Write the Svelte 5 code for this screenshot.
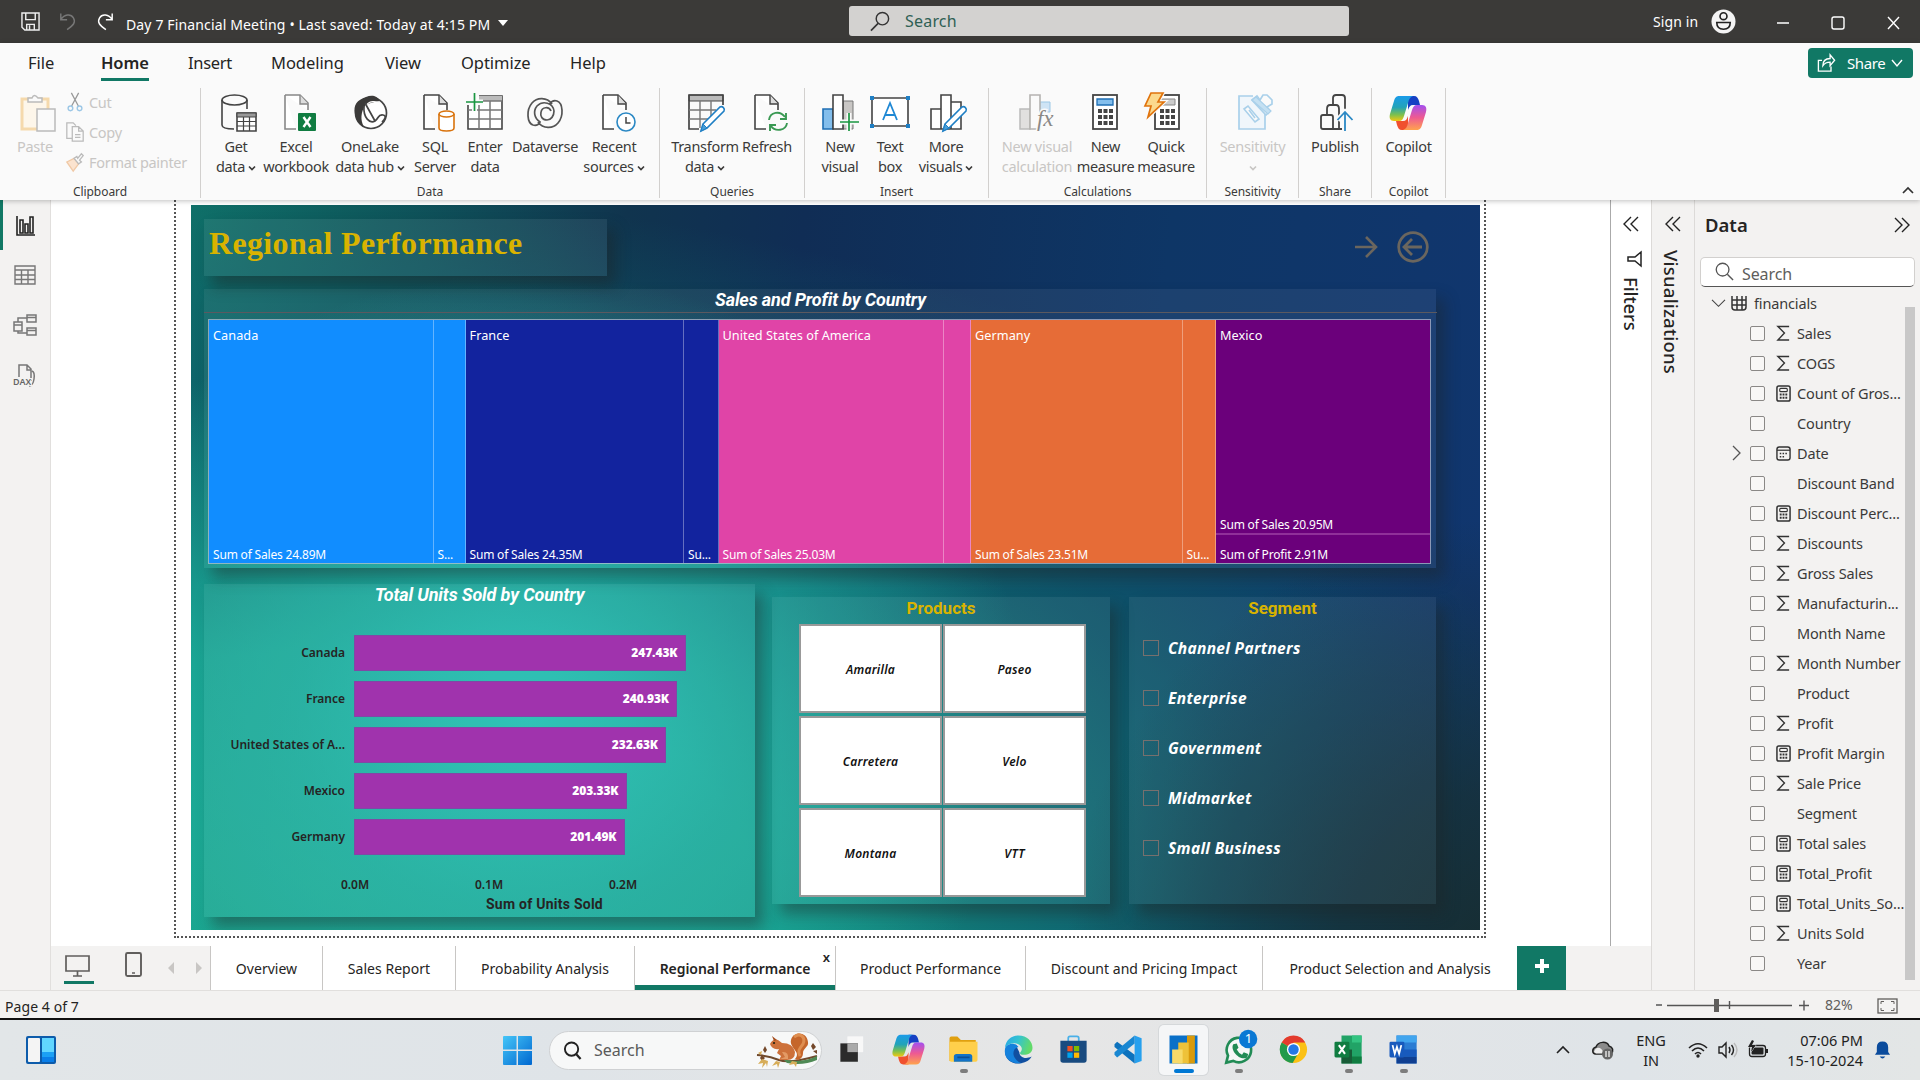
<script>
  const doc = '<path d="M5 2h15l8 8v7M5 2v34h11" fill="#fff" stroke="#444" stroke-width="1.6"/><path d="M20 2v9h8" fill="#ddd" stroke="#444" stroke-width="1.4"/>';
  const copilot = `<defs><linearGradient id="ca" x1="0" y1="0" x2="0" y2="1"><stop offset="0" stop-color="#1a9bea"/><stop offset=".45" stop-color="#22a3b8"/><stop offset=".75" stop-color="#7cc04e"/><stop offset="1" stop-color="#f2c811"/></linearGradient><linearGradient id="cb" x1="0" y1="0" x2="0" y2="1"><stop offset="0" stop-color="#a34ff0"/><stop offset=".5" stop-color="#ee5a92"/><stop offset="1" stop-color="#ffa34d"/></linearGradient></defs>
  <path d="M20 3h6c3 0 4 2 5 5l1 4h-7c-3 0-4 2-5 5z" fill="#1540c4"/><path d="M20 37h-6c-3 0-4-2-5-5l-1-4h7c3 0 4-2 5-5z" fill="#f0502e"/>
  <path d="M11 3h14c-3 1-4 3-5 7l-4 13c-1 3-2 5-5 5H6c-4 0-5-3-4-7l4-13c1-4 3-5 5-5z" fill="url(#ca)"/><path d="M29 37H15c3-1 4-3 5-7l4-13c1-3 2-5 5-5h5c4 0 5 3 4 7l-4 13c-1 4-3 5-5 5z" fill="url(#cb)"/>`;
  const pencil = '<path d="M17 31L34 14a3 3 0 0 1 4 4L21 35l-6 3z" fill="#fff" stroke="#1f7fc4" stroke-width="1.6"/><path d="M17 31l4 4-6 3z" fill="#4a9fd8" stroke="#1f7fc4"/>';
  const calc = '<rect x="8" y="2" width="24" height="34" fill="#fff" stroke="#444" stroke-width="1.8"/><path d="M13 16h4v4h-4zM18.500 16h4v4h-4zM24 16h4v4h-4zM13 22h4v4h-4zM18.500 22h4v4h-4zM24 22h4v4h-4zM13 28h4v4h-4zM18.500 28h4v4h-4zM24 28h4v4h-4z" fill="#444"/>';
  const icons = {
    get: '<path d="M2 7v25c0 3 5 4 12 4M27 7v9" fill="none" stroke="#444" stroke-width="1.6"/><ellipse cx="14.500" cy="7" rx="12.500" ry="5" fill="none" stroke="#444" stroke-width="1.6"/><path d="M17 20h19v18H17z" fill="#fff" stroke="#444" stroke-width="1.6"/><path d="M17 20h19v4H17z" fill="#999" stroke="#444"/><path d="M17 28.500h19M17 33h19M23.500 24v14M29.500 24v14" stroke="#444" stroke-width="1.200"/>',
    excel: doc.replaceAll('#444', '#888') + '<rect x="18" y="20" width="18" height="18" rx="1" fill="#107c41"/><path d="M23.500 24l7 10M30.500 24l-7 10" stroke="#fff" stroke-width="2.400"/>',
    onelake: '<circle cx="21" cy="20" r="15.500" fill="#fff" stroke="#444" stroke-width="1.700"/><path d="M16 4C7 7 3 12 5 21c1 7 5 11 9 13-4-7-3-15 1-21 5-4 10-4 15-5-3-6-9-6-14-4z" fill="#3b3a39"/><path d="M15 14c4-7 11-6 15-4" fill="none" stroke="#fafafa" stroke-width="1.200"/><path d="M14 13c-1 12 6 18 11 15 4-3 3-7 8-6 4 1 2 4-1 7M15 10l10 18" fill="none" stroke="#444" stroke-width="1.700"/>',
    sql: doc + '<path d="M20 21v14c0 4 15 4 15 0V21" fill="#fff" stroke="#d9730d" stroke-width="1.600"/><ellipse cx="27.500" cy="21" rx="7.500" ry="3" fill="#fff" stroke="#d9730d" stroke-width="1.600"/>',
    enter: '<path d="M3 12v24h34V3H14" fill="#fff" stroke="#444" stroke-width="1.600"/><path d="M14 3h23v5H14z" fill="#bbb"/><path d="M3 17h34M3 26h34M14 12v24M25 8v28M14 8h23" stroke="#777" stroke-width="1.500"/><path d="M9.500 0v18M1 9h17" stroke="#fafafa" stroke-width="5"/><path d="M9.500 0v18M1 9h17" stroke="#1a9641" stroke-width="1.700"/>',
    dataverse: '<path d="M27 11C22 4 12 4 7 10 1 17 2 30 8 32c4 1 6-1 7-3-6-4-7-11-3-16 6-6 16-3 17 5 0 5-3 9-7 9-5 0-7-4-6-8 1-5 8-6 10-1M13 29c5 7 15 7 20 1 6-7 5-20-1-22-4-1-6 1-7 3" fill="none" stroke="#555" stroke-width="1.700"/>',
    recent: doc + '<circle cx="28" cy="29" r="9" fill="#fff" stroke="#2b88c4" stroke-width="1.600"/><path d="M28 24v6h4.500" fill="none" stroke="#444" stroke-width="1.500"/>',
    transform: '<path d="M3 2h34v6H3z" fill="#bbb" stroke="#444"/><path d="M37 12V2H3v34h10" fill="none" stroke="#444" stroke-width="1.700"/><path d="M3 17h27M3 26h19M14 8v27M25 8v16" stroke="#777" stroke-width="1.400"/>' + pencil,
    refresh: doc + '<path d="M19 27c1-8 11-10 16-3M36 20v6h-6M37 30c-1 8-12 9-16 3M20 38v-6h6" fill="none" stroke="#3a9953" stroke-width="1.900"/>',
    newvis: '<path d="M3 16h10v20H3z" fill="#83beec" stroke="#1f6fb4" stroke-width="1.600"/><path d="M23 8h10v28H23z" fill="#c8c6c4" stroke="#777"/><path d="M13 2h10v34H13z" fill="#fff" stroke="#444" stroke-width="1.600"/><path d="M29 20v18M20 29h19" stroke="#fafafa" stroke-width="5"/><path d="M29 20v18M20 29h19" stroke="#1a9641" stroke-width="1.700"/>',
    textbox: '<path d="M2 5h36v28H2z" fill="#fff" stroke="#444" stroke-width="1.600"/><path d="M0 3h4v4H0zM36 3h4v4h-4zM0 31h4v4H0zM36 31h4v4h-4z" fill="#1f7fc4"/><path d="M13 27l7-17 7 17M15.500 22h9" fill="none" stroke="#1f88d4" stroke-width="1.800"/>',
    morevis: '<path d="M3 16h10v20H3zM23 9h10v27H23zM13 2h10v34H13z" fill="#fff" stroke="#444" stroke-width="1.600"/>' + pencil,
    viscalc: '<path d="M3 16h10v20H3z" fill="#e1e0df" stroke="#bbb" stroke-width="1.500"/><path d="M23 9h10v10H23z" fill="#cfe4f5" stroke="#9cc7e6"/><path d="M13 2h10v34H13z" fill="#fafafa" stroke="#b5b3b1" stroke-width="1.600"/><text x="20" y="33" font-size="23" font-family="Liberation Serif" font-style="italic" fill="#8a8886" stroke="#fafafa" stroke-width="3" paint-order="stroke">fx</text>',
    newmeas: calc + '<path d="M12 6h16v6H12z" fill="#83beec" stroke="#1f6fb4" stroke-width="1.300"/>',
    quick: '<g transform="translate(5 0)">' + calc + '<path d="M14 6h14v6H14z" fill="#ccc" stroke="#888"/></g><path d="M9 0h12l-5 9h6L6 24l3-11H3z" fill="#fbd98d" stroke="#fafafa" stroke-width="4"/><path d="M9 0h12l-5 9h6L6 24l3-11H3z" fill="#fbd98d" stroke="#e0730c" stroke-width="1.700"/>',
    sens: '<path d="M19 3H5v33h26V20" fill="#f0f6fb" stroke="#a9d0ea" stroke-width="1.700"/><path d="M10 16l4-3 11 13-4 3zM15 17l6 8" fill="#fafafa" stroke="#a9d0ea" stroke-width="1.600"/><path d="M18 7l5-4 3 4 3-5h4l5 5v4l-5 3 3 4-4 4z" fill="#fafafa" stroke="#a9d0ea" stroke-width="1.700"/><path d="M18 7l4-3 15 14-3 3z" fill="#c4e0f2" stroke="#a9d0ea" stroke-width="1.200"/>',
    publish: '<path d="M14 12V5q0-3 3-3h6q3 0 3 3v31M8 22v-6q0-4 3-4h6q3 0 3 4v20M2 24q0-2 2-2h8q2 0 2 2v12H4q-2 0-2-2zM14 36h9" fill="none" stroke="#444" stroke-width="1.800"/><path d="M26 38V20M18.500 27l7.500-8 7.500 8" fill="none" stroke="#fafafa" stroke-width="5"/><path d="M26 38V20M18.500 27l7.500-8 7.500 8" fill="none" stroke="#2b88c4" stroke-width="1.800"/>',
    copilot
  };
  const groups = [
    { n: 'Data', w: 459, p: 9, tools: [['get', 'Get', 'data', 52, 1, 4], ['excel', 'Excel', 'workbook', 68, 0, 4], ['onelake', 'OneLake', 'data hub', 80, 1, 0], ['sql', 'SQL', 'Server', 50, 0, 4], ['enter', 'Enter', 'data', 50, 0, 0], ['dataverse', 'Dataverse', '', 70, 0, 0], ['recent', 'Recent', 'sources', 68, 1, 4]] },
    { n: 'Queries', w: 145, p: 12, tools: [['transform', 'Transform', 'data', 66, 1, 1], ['refresh', 'Refresh', '', 58, 0, 3]] },
    { n: 'Insert', w: 184, p: 10, tools: [['newvis', 'New', 'visual', 50, 0, 0], ['textbox', 'Text', 'box', 50, 0, 0], ['morevis', 'More', 'visuals', 62, 1, 2]] },
    { n: 'Calculations', w: 218, p: 11, tools: [['viscalc', 'New visual', 'calculation', 74, 0, 0, 1], ['newmeas', 'New', 'measure', 63, 0, -1], ['quick', 'Quick', 'measure', 58, 0, -4]] },
    { n: 'Sensitivity', w: 92, p: 0, tools: [['sens', 'Sensitivity', '', 91, 1, 1, 1]] },
    { n: 'Share', w: 73, p: 0, tools: [['publish', 'Publish', '', 72, 0, 4]] },
    { n: 'Copilot', w: 74, p: 0, tools: [['copilot', 'Copilot', '', 73, 0, -1]] }
  ];
  const menus = ['File', 'Home', 'Insert', 'Modeling', 'View', 'Optimize', 'Help'];
  const rail = [
    '<path d="M3 3v19h18M6 20V7h3v13zM11 20v-9h3v9zM16 20V4h3v16z" fill="none" stroke="#222" stroke-width="1.600"/>',
    '<path d="M2 3h20v18H2zM2 7h20M2 12h20M2 16.500h20M8.500 7v14M15 7v14" fill="none" stroke="#777" stroke-width="1.400"/>',
    '<path d="M1 9h8v9H1zM14 2h9v7h-9zM14 15h9v7h-9zM1 12h8M14 4.500h9M14 17.500h9M5 9V5h9M5 18v2h9" fill="none" stroke="#777" stroke-width="1.500"/>',
    '<path d="M6 14V2h8l4 4v12M14 2v5h4M19 8q3 1 2 8t-5 7" fill="none" stroke="#777" stroke-width="1.500"/><text x="0" y="22" font-size="9" font-weight="600" font-family="Noto Sans" fill="#666" stroke="#f3f2f1" stroke-width="2" paint-order="stroke">DAX</text>'
  ];
  const tree = [
    ['Canada', '24.89M', 'S...', '#118dff', 224.500, 32], ['France', '24.35M', 'Su...', '#12239e', 218.500, 34.500],
    ['United States of America', '25.03M', '', '#e044a7', 225.500, 27], ['Germany', '23.51M', 'Su...', '#e66c37', 211.500, 33.500]
  ];
  const bars = [['Canada', '247.43K', 331.500], ['France', '240.93K', 323], ['United States of A...', '232.63K', 312], ['Mexico', '203.33K', 272.500], ['Germany', '201.49K', 270.500]];
  const products = ['Amarilla', 'Paseo', 'Carretera', 'Velo', 'Montana', 'VTT'];
  const segments = ['Channel Partners', 'Enterprise', 'Government', 'Midmarket', 'Small Business'];
  const fields = [['Sales', 's'], ['COGS', 's'], ['Count of Gros...', 'c'], ['Country', ''], ['Date', 'd'], ['Discount Band', ''], ['Discount Perc...', 'c'], ['Discounts', 's'], ['Gross Sales', 's'], ['Manufacturin...', 's'], ['Month Name', ''], ['Month Number', 's'], ['Product', ''], ['Profit', 's'], ['Profit Margin', 'c'], ['Sale Price', 's'], ['Segment', ''], ['Total sales', 'c'], ['Total_Profit', 'c'], ['Total_Units_So...', 'c'], ['Units Sold', 's'], ['Year', '']];
  const fieldIcons = {
    s: '<path d="M14 1.500H2l7 7-7 7.500h12" fill="none" stroke="#333" stroke-width="1.500"/>',
    c: '<rect x="1" y="1" width="14" height="16" rx="2" fill="none" stroke="#333" stroke-width="1.600"/><rect x="4" y="3.500" width="8" height="3.500" rx="1" fill="none" stroke="#333" stroke-width="1.200"/><path d="M4 10h8M4 13.500h8" stroke="#333" stroke-width="2" stroke-dasharray="2 1"/>',
    d: '<rect x="1" y="2" width="14" height="14" rx="2.500" fill="none" stroke="#333" stroke-width="1.500"/><path d="M1 5.500h14" stroke="#333" stroke-width="1.300"/><path d="M4 9h8M4 12.500h5" stroke="#333" stroke-width="1.600" stroke-dasharray="1.600 1.400"/>'
  };
  const pages = [['Overview', 112], ['Sales Report', 133], ['Probability Analysis', 179], ['Regional Performance', 201], ['Product Performance', 190], ['Discount and Pricing Impact', 237], ['Product Selection and Analysis', 255]];
  const apps = [
    { s: '<path d="M13 5h18v18H13z" fill="#f8f8f8"/><path d="M5 13h20v21H5z" fill="#2b2b2b"/><path d="M13 13h12v10H13z" fill="#aaa"/>' },
    { s: copilot },
    { s: '<path d="M4 7q0-2 2-2h7l4 4h17v24H4z" fill="#e0a010"/><path d="M4 11h32v21q0 2-2 2H6q-2 0-2-2z" fill="#ffcf4b"/><path d="M9 34v-6q0-3 3-3h15q3 0 3 3v6z" fill="#1273c8"/><path d="M13 29h14" stroke="#0b4f94" stroke-width="2"/>', run: 1 },
    { s: '<defs><linearGradient id="e1" x1="0" y1="0" x2="1" y2=".3"><stop offset="0" stop-color="#28a5e8"/><stop offset=".5" stop-color="#34c3d0"/><stop offset="1" stop-color="#62da6a"/></linearGradient></defs><path d="M5 20C3 30 12 37 21 36c8-1 12-4 14-8-8 4-14 0-14-5l-4-8z" fill="#114fa0"/><path d="M4.500 20C5 13 16 11 20 17c-6 1-8 9-3 14 2 3 5 5 8 4.500C13 37 3 31 4.500 20z" fill="#1581dc"/><path d="M4.500 19C5 9 12 4 20 4c10 0 16 7 16 14 0 6-5 8-10 8-5 0-5-2-3-4 3-5-3-10-9-9-5 0-9 3-9.500 6z" fill="url(#e1)"/>' },
    { s: '<path d="M14 11V7q0-2 2-2h8q2 0 2 2v4" fill="none" stroke="#4ab0e8" stroke-width="2"/><path d="M5 10h30v22q0 3-3 3H8q-3 0-3-3z" fill="#194b80"/><path d="M13 16h6v6h-6z" fill="#f25022"/><path d="M20.500 16h6v6h-6z" fill="#7fba00"/><path d="M13 23.500h6v6h-6z" fill="#00a4ef"/><path d="M20.500 23.500h6v6h-6z" fill="#ffb900"/>' },
    { s: '<path d="M27 4l8 3v26l-8 3V4z" fill="#27a0ee"/><path d="M4 14l3-3 20 15v10L4 17z" fill="#0d72bd"/><path d="M4 26l3 3 20-16V4L4 23z" fill="#1987d2"/>' },
    { s: '<path d="M4 4h32v32H4z" fill="#0a70c8"/><path d="M24 4h9v32h-9z" fill="#d99a0b"/><path d="M14 12h12v24H14z" fill="#eec239"/><path d="M7 20h12v16H7z" fill="#f7da69"/>', active: 1 },
    { s: '<path d="M6 35l2-8a14 14 0 1 1 6 6z" fill="#f5f7f7" stroke="#218b55" stroke-width="3"/><path d="M14 14l4-1 2 5-2 2q2 4 6 6l2-3 5 2-1 4c-8 5-20-8-16-15z" fill="#218b55"/><circle cx="31" cy="8" r="10.500" fill="#0a78d4"/><text x="27" y="13" font-size="15" font-family="Noto Sans" fill="#fff">1</text>', run: 1 },
    { s: '<circle cx="20" cy="20" r="15.500" fill="#fbc116"/><path d="M20 20L6.500 12A15.500 15.500 0 0 1 33.500 12H20z" fill="#e33b2e"/><path d="M20 20l-13.500-8A15.500 15.500 0 0 0 19 35.500l7-12z" fill="#229a4b"/><circle cx="20" cy="20" r="7.500" fill="#fff"/><circle cx="20" cy="20" r="6" fill="#2478e5"/>' },
    { s: '<path d="M12 4h23v32H12z" fill="#21a366"/><path d="M24 4h11v8H24z" fill="#33c481"/><path d="M12 20h12v16H12z" fill="#185c37"/><path d="M24 28h11v8H24z" fill="#107c41"/><rect x="4" y="11" width="17" height="18" rx="1.500" fill="#107c41"/><path d="M9 15l7 10M16 15L9 25" stroke="#fff" stroke-width="2.400"/>', run: 1 },
    { s: '<path d="M12 4h23v32H12z" fill="#2b7cd3"/><path d="M12 4h23v8H12z" fill="#41a5ee"/><path d="M12 28h23v8H12z" fill="#103f91"/><path d="M12 20h23v8H12z" fill="#185abd"/><rect x="4" y="11" width="17" height="18" rx="1.500" fill="#185abd"/><path d="M7.500 15l2.500 10 2.500-8 2.500 8 2.500-10" fill="none" stroke="#fff" stroke-width="2"/>', run: 1 }
  ];
</script>

<div class="screen">
  <header class="titlebar">
    <svg class="save" viewBox="0 0 20 20"><path d="M1 1h18v18H4l-3-3zM5 1v7h10V1M6 19v-6h8v6M9 14v5" fill="none" stroke="#eee" stroke-width="1.500" /></svg>
    <svg class="undo" viewBox="0 0 20 20"><path d="M2 1v7h7M2 8C6 2 13 1 16 6s0 8-7 13" fill="none" stroke="#777" stroke-width="1.600" /></svg>
    <svg class="redo" viewBox="0 0 20 20"><path d="M18 1v7h-7M18 8C14 2 7 1 4 6s0 8 7 13" fill="none" stroke="#fff" stroke-width="1.600" /></svg>
    <span class="doc">Day 7 Financial Meeting&nbsp;•&nbsp;Last saved: Today at 4:15 PM</span><i class="tri"></i>
    <div class="topsearch"><svg viewBox="0 0 22 22"><circle cx="13" cy="8" r="6.500" fill="none" stroke="#333" stroke-width="1.500" /><path d="M8.500 13L1 20.500" stroke="#333" stroke-width="1.700" /></svg>Search</div>
    <span class="signin">Sign in</span>
    <svg class="user" viewBox="0 0 26 26"><circle cx="13" cy="13" r="12.500" fill="#f4f4f4" /><circle cx="13" cy="7.500" r="3.600" fill="none" stroke="#222" stroke-width="1.700" /><path d="M6 14h14q0 7-7 7t-7-7z" fill="none" stroke="#222" stroke-width="1.700" /></svg>
    <svg class="win" viewBox="0 0 124 16"><path d="M1 8h12M112 2l11 12M123 2l-11 12" stroke="#fff" stroke-width="1.400" /><rect x="56" y="2" width="12" height="12" rx="2" fill="none" stroke="#fff" stroke-width="1.400" /></svg>
  </header>

  <div class="ribbon">
    <nav class="menus">
      {#each menus as m, i}<span class="menu m{i}" class:on={m === 'Home'}>{m}</span>{/each}
      <button class="share"><svg viewBox="0 0 20 20"><path d="M5 7H1v12h14v-5M6 13c0-6 3-8 8-8V1l5 6-5 6V9c-4 0-6 1-8 4z" fill="none" stroke="#fff" stroke-width="1.500" /></svg>Share<svg class="chev" viewBox="0 0 12 12"><path d="M1 3l5 6 5-6" fill="none" stroke="#fff" stroke-width="1.400" /></svg></button>
    </nav>
    <div class="groups">
      <section class="group clip">
        <div class="cliprow">
          <div class="paste"><svg viewBox="0 0 36 40"><path d="M2 6h26v30H2z" fill="#fdf6ea" stroke="#f5d9ac" stroke-width="3" /><path d="M8 9V5h4q2-5 6 0h4v4z" fill="#fafafa" stroke="#bbb" stroke-width="1.500" /><path d="M17 16h18v22H17z" fill="#fafafa" stroke="#bbb" stroke-width="1.500" /></svg><span>Paste</span></div>
          <div class="small">
            <span><svg viewBox="0 0 20 22"><path d="M6 1l8 15M14 1L6 16" stroke="#999" stroke-width="1.400" /><circle cx="5" cy="18" r="2.600" fill="none" stroke="#9cc7e6" stroke-width="1.500" /><circle cx="15" cy="18" r="2.600" fill="none" stroke="#9cc7e6" stroke-width="1.500" /></svg>Cut</span>
            <span><svg viewBox="0 0 20 22"><path d="M7 18H1V1h7l3 3M7 5h7l5 5v11H7zM14 5v5h5M10 14h6M10 17h6" fill="none" stroke="#bbb" stroke-width="1.400" /></svg>Copy</span>
            <span><svg viewBox="0 0 20 22"><path d="M1 11l8-4 5 6-6 8z" fill="#fbe3cf" stroke="#f0c9a6" stroke-width="1.500" /><path d="M9 7l3-2 1 2 4-5 2 2-4 5 2 2-3 2z" fill="#fafafa" stroke="#bbb" stroke-width="1.500" /></svg>Format painter</span>
          </div>
        </div>
        <label>Clipboard</label>
      </section>
      {#each groups as g}
        <section class="group" style:width="{g.w}px">
          <div class="tools" style:padding-left="{g.p}px">
            {#each g.tools as t}
              <div class="tool" class:off={t[6]} style:width="{t[3]}px">
                <svg viewBox="0 0 40 40" style:margin-left="{t[5] * 2}px">{@html icons[t[0]]}</svg>
                <span>{t[1]}</span>
                <span>{t[2]}{#if t[4]}<svg class="dd" viewBox="0 0 8 8"><path d="M1 2.500l3 3 3-3" fill="none" stroke="currentColor" stroke-width="1.700" /></svg>{/if}</span>
              </div>
            {/each}
          </div>
          <label>{g.n}</label>
        </section>
      {/each}
      <svg class="collapse" viewBox="0 0 12 12"><path d="M1 9l5-5 5 5" fill="none" stroke="#333" stroke-width="1.700" /></svg>
    </div>
  </div>

  <div class="work">
    <aside class="rail">{#each rail as r, i}<div class:on={i === 0}><svg viewBox="0 0 24 24">{@html r}</svg></div>{/each}</aside>
    <div class="center">
      <div class="upper">
        <main class="canvas">
          <div class="frame">
            <div class="report">
              <div class="head">
                <h1>Regional Performance</h1>
                <svg class="arrow" viewBox="0 0 24 24"><path d="M1 12h20M12 2l10 10-10 10" fill="none" stroke="#6b665e" stroke-width="2.600" /></svg>
                <svg class="back" viewBox="0 0 32 32"><circle cx="16" cy="16" r="14.300" fill="none" stroke="#6b665e" stroke-width="2.800" /><path d="M25 16H8M15 8l-8 8 8 8" fill="none" stroke="#6b665e" stroke-width="2.800" /></svg>
              </div>
              <section class="card treecard">
                <h2>Sales and Profit by Country</h2>
                <div class="tree">
                  {#each tree as t}
                    <div class="tile" style:width="{t[4]}px" style:background={t[3]}><span>{t[0]}</span><span>Sum of Sales {t[1]}</span></div>
                    <div class="tile thin" style:width="{t[5]}px" style:background={t[3]}><span></span><span>{t[2]}</span></div>
                  {/each}
                  <div class="mex"><div class="tile"><span>Mexico</span><span>Sum of Sales 20.95M</span></div><div class="tile low"><span>Sum of Profit 2.91M</span></div></div>
                </div>
              </section>
              <div class="bottom">
                <section class="card units">
                  <h2>Total Units Sold by Country</h2>
                  <div class="bars">
                    {#each bars as b}<div class="barrow"><span>{b[0]}</span><b style:width="{b[2]}px">{b[1]}</b></div>{/each}
                  </div>
                  <div class="axis"><span>0.0M</span><span>0.1M</span><span>0.2M</span></div>
                  <div class="axtitle">Sum of Units Sold</div>
                </section>
                <section class="card products"><h3>Products</h3><div class="grid">{#each products as p}<div>{p}</div>{/each}</div></section>
                <section class="card segment"><h3>Segment</h3>{#each segments as s}<div class="seg"><i></i>{s}</div>{/each}</section>
              </div>
            </div>
          </div>
        </main>
        <aside class="filters">
          <svg class="dbl" viewBox="0 0 16 16"><path d="M8 1L1 8l7 7M15 1L8 8l7 7" fill="none" stroke="#222" stroke-width="1.400" /></svg>
          <svg class="funnel" viewBox="0 0 16 16"><path d="M15 1v14l-6-5H2V6h7z" fill="none" stroke="#222" stroke-width="1.500" /></svg>
          <span>Filters</span>
        </aside>
      </div>
      <div class="tabs">
        <svg class="views" viewBox="0 0 159 44"><path d="M15 10h23v15H15zM26.500 25v5M22 30h9" fill="none" stroke="#605e5c" stroke-width="1.700" /><path d="M13 35h30v3H13z" fill="#117865" /><rect x="75" y="7" width="15" height="23" rx="1.500" fill="none" stroke="#605e5c" stroke-width="1.900" /><path d="M81 27h3" stroke="#605e5c" stroke-width="1.500" /><path d="M123 16v12l-6-6zM145 16v12l6-6z" fill="#c8c6c4" /></svg>
        {#each pages as p, i}<div class="page" class:on={i === 3} style:width="{p[1]}px">{p[0]}{#if i === 3}<em>x</em>{/if}</div>{/each}
        <div class="plus"><svg viewBox="0 0 14 14"><path d="M7 0v14M0 7h14" stroke="#fff" stroke-width="4" /></svg></div>
      </div>
    </div>
    <aside class="viz"><svg class="dbl" viewBox="0 0 16 16"><path d="M8 1L1 8l7 7M15 1L8 8l7 7" fill="none" stroke="#222" stroke-width="1.400" /></svg><span>Visualizations</span></aside>
    <aside class="data">
      <div class="dhead">Data<svg class="dbl" viewBox="0 0 16 16"><path d="M1 1l7 7-7 7M8 1l7 7-7 7" fill="none" stroke="#222" stroke-width="1.400" /></svg></div>
      <div class="dsearch"><svg viewBox="0 0 20 20"><circle cx="8" cy="8" r="6.700" fill="none" stroke="#555" stroke-width="1.400" /><path d="M13 13l6 6" stroke="#555" stroke-width="1.500" /></svg>Search</div>
      <div class="dlist">
        <div class="fields">
          <div class="fin"><svg class="cv" viewBox="0 0 14 14"><path d="M0 3l7 7 7-7" fill="none" stroke="#444" stroke-width="1.200" /></svg><svg class="fi" viewBox="0 0 16 16"><path d="M1 1v11q0 3 3 3h8q3 0 3-3V1M1 5h14M1 10h14M6 1v14M11 1v14" fill="none" stroke="#333" stroke-width="1.500" /></svg>financials</div>
          {#each fields as f}
            <div class="field"><svg class="ex" viewBox="0 0 10 16">{#if f[1] === 'd'}<path d="M1 1l7 7-7 7" fill="none" stroke="#555" stroke-width="1.300" />{/if}</svg><i></i><svg class="fi" viewBox="0 0 16 18">{@html fieldIcons[f[1]] ?? ''}</svg>{f[0]}</div>
          {/each}
        </div>
        <div class="scroll"></div>
      </div>
    </aside>
  </div>

  <footer class="status"><span>Page 4 of 7</span>
    <svg viewBox="0 0 252 28"><path d="M1 15h6M12 15.500h125M74.500 11v8M144 15.500h10M149 10.500v10" stroke="#555" stroke-width="1.400" /><path d="M59 9h5v13h-5z" fill="#605e5c" /><rect x="223" y="9" width="19" height="14" fill="none" stroke="#605e5c" stroke-width="1.300" /><path d="M226 14v-2.500h3M236 11.500h3V14M239 18v2.500h-3M229 20.500h-3V18" fill="none" stroke="#605e5c" /><text x="170" y="20" font-size="14" letter-spacing="0" fill="#605e5c" font-family="Noto Sans">82%</text></svg>
  </footer>

  <footer class="taskbar">
    <svg class="widgets" viewBox="0 0 30 28"><rect width="30" height="28" rx="2" fill="#0d5cab" /><rect x="2" y="2" width="12" height="24" rx="1" fill="#f4f4f4" /><path d="M16 2h12v14H16z" fill="#61d6ff" /><path d="M16 16h12v5H16z" fill="#1ba0f5" /><path d="M16 21h12v5H16z" fill="#0a7ee8" /></svg>
    <svg class="start" viewBox="0 0 30 30"><defs><linearGradient id="w" x1="0" y1="0" x2="1" y2="1"><stop offset="0" stop-color="#45c6f8" /><stop offset="1" stop-color="#0067d0" /></linearGradient></defs><path d="M0 1q0-1 1-1h13v14H0zM15.500 0H29q1 0 1 1v13H15.500zM0 15.500h14V30H1q-1 0-1-1zM15.500 15.500H30V29q0 1-1 1H15.500z" fill="url(#w)" /></svg>
    <div class="tsearch"><svg class="mag" viewBox="0 0 20 20"><circle cx="9" cy="8.500" r="7" fill="none" stroke="#222" stroke-width="2" /><path d="M14 14l4.500 5" stroke="#222" stroke-width="2.400" /></svg>Search
      <svg class="squirrel" viewBox="0 0 64 36"><path d="M2 23q12 1 22 5t38-4" fill="none" stroke="#6f4a2d" stroke-width="2" /><path d="M28 27q18 5 34-3v4q-14 6-30 3z" fill="#4f8a55" /><path d="M40 27c7-7-6-11-4-19C38-1 52-1 53 10c1 5-5 6-5 11 0 6-5 8-8 6z" fill="#c5662b" /><path d="M39 5c6-5 12 0 9 7-3 4-6 7-3 12" fill="none" stroke="#de8e50" stroke-width="3" /><path d="M15 12q3-6 8-4l4 3q11 0 13 9 0 8-8 8h-8l2-4-4-3 2-4q-7 1-9-5z" fill="#cd713a" /><path d="M27 20q7-1 6 7h-8l5-2z" fill="#e39a64" /><path d="M19 9l-2-5 5 4z" fill="#a54d1e" /><circle cx="19" cy="11" r="1.100" fill="#221" /><path d="M8 18l2-4 2 4-2 3zM5 26l2-3 3 3-3 3zM56 14l2-3 3 4-3 3zM58 19l4-1 0 4z" fill="#74482a" /><path d="M7 27l-4 5 5-1-1 5 4-5 1 4 1-6zM21 29l-4 5 5-2 1 4 2-6zM37 29l-3 4 5-1 2 3 1-5zM3 21l4-2-1 4z" fill="#d7ad58" /></svg>
    </div>
    <div class="apps">{#each apps as a}<div class="app" class:active={a.active}><svg viewBox="0 0 40 40">{@html a.s}</svg>{#if a.run || a.active}<i></i>{/if}</div>{/each}</div>
    <svg class="tchev" viewBox="0 0 14 14"><path d="M1 10l6-6 6 6" fill="none" stroke="#222" stroke-width="1.600" /></svg>
    <svg class="cloud" viewBox="0 0 22 20"><path d="M5 14C-1 14 0 8 4 7c2-6 11-6 13-1 4 1 5 5 2 8z" fill="#8b8b8b" stroke="#222" stroke-width="1.500" /><path d="M2 12c1-5 7-6 9 0l-1 1.500H4z" fill="#eee" /><circle cx="15.500" cy="14" r="5.500" fill="#666" /><path d="M14 11v6M17 11v6" stroke="#fff" stroke-width="1.200" /></svg>
    <div class="lang"><span>ENG</span><span>IN</span></div>
    <svg class="wifi" viewBox="0 0 80 20"><path d="M1 8q9-8.500 18 0M4 11q6-6 12 0M7 14q3-3 6 0" fill="none" stroke="#222" stroke-width="1.600" /><circle cx="10" cy="16" r="1.700" fill="#222" /><path d="M31 7h3l4-4v14l-4-4h-3z" fill="none" stroke="#222" stroke-width="1.400" /><path d="M41 7q2 3 0 6M43.500 5q4 5 0 10" fill="none" stroke="#222" stroke-width="1.400" /><path d="M46 3q6 7 0 14" fill="none" stroke="#bbb" stroke-width="1.400" /><rect x="61.500" y="5.500" width="16" height="11" rx="2.500" fill="none" stroke="#222" stroke-width="1.300" /><rect x="63.500" y="7.500" width="12" height="7" rx="1" fill="#222" /><path d="M78 9h2v4h-2z" fill="#222" /><path d="M64 0l-4 7h4l-1 5 5-7h-4l2-4z" fill="#222" stroke="#e2e5e8" stroke-width="1" paint-order="stroke" /></svg>
    <div class="clock"><span>07:06 PM</span><span>15-10-2024</span></div>
    <svg class="bell" viewBox="0 0 18 20"><path d="M1 15l2-3V7Q3 1 9 1t6 6v5l2 3zM6 17h6q-3 4-6 0z" fill="#0a4b9c" /></svg>
  </footer>
</div>

<style>
  :global(body) { margin: 0; overflow: hidden; }
  * { box-sizing: border-box; }
  svg { display: block; flex: none; overflow: visible; }
  .screen { width: 1920px; height: 1080px; display: flex; flex-direction: column; background: #fff; font-family: 'Noto Sans', sans-serif; font-size: 14px; color: #252423; white-space: nowrap; overflow: hidden; }
  .titlebar { height: 43px; flex: none; background: #3b3a38; color: #fff; display: flex; align-items: center; }
  .save { width: 19px; height: 19px; margin: 0 0 1px 21px; }
  .undo { width: 18px; height: 19px; margin-left: 19px; }
  .redo { width: 18px; height: 19px; margin-left: 19px; }
  .doc { width: 364px; margin: 5px 0 0 12px; font-size: 14px; letter-spacing: .14px; }
  .tri { border: 5px solid transparent; border-top: 6px solid #fff; margin: 8px 0 0 8px; }
  .topsearch { width: 500px; height: 30px; margin: 0 0 1px 341px; background: #d3d2d0; border-radius: 3px; color: #2f6054; font-size: 16px; display: flex; align-items: center; gap: 33px; letter-spacing: .2px; }
  .topsearch svg { width: 21px; height: 21px; margin: 0 -19px 0 21px; }
  .signin { margin-left: 304px; width: 46px; letter-spacing: .1px; }
  .user { width: 25px; height: 25px; margin-left: 12px; }
  .win { width: 124px; height: 16px; margin: 3px 0 0 40px; }
  .ribbon { height: 157px; flex: none; background: #fafafa; position: relative; z-index: 2; box-shadow: 0 1px 5px rgba(0,0,0,.25); }
  .menus { height: 45px; display: flex; align-items: flex-start; font-size: 16.500px; letter-spacing: -.05px; }
  .menu { height: 38px; line-height: 39px; flex: none; }
  .m0 { width: 73px; margin-left: 28px; }
  .m1 { width: 48px; margin-right: 39px; }
  .m2 { width: 83px; letter-spacing: -.3px; } .m3 { width: 114px; } .m4 { width: 76px; } .m5 { width: 109px; } .m6 { width: 59px; }
  .menu.on { font-weight: 600; letter-spacing: -.1px; border-bottom: 3px solid #117865; }
  .share { margin: 5px 0 0 1179px; width: 105px; height: 30px; border: 0; border-radius: 4px; background: #117865; color: #fff; font: 15px 'Noto Sans', sans-serif; letter-spacing: -.4px; display: flex; align-items: center; padding: 0 0 0 9px; gap: 11px; }
  .share svg { width: 19px; height: 18px; }
  .share .chev { width: 12px; height: 12px; margin-left: -5px; }
  .groups { display: flex; height: 110px; }
  .group { flex: none; border-right: 1px solid #d2d0ce; height: 110px; display: flex; flex-direction: column; justify-content: space-between; }
  .group label { font-size: 12px; letter-spacing: -.05px; text-align: center; line-height: 13px; color: #3b3a39; }
  .clip { width: 201px; }
  .tools { display: flex; padding-top: 5px; }
  .tool { flex: none; display: flex; flex-direction: column; align-items: center; line-height: 20px; font-size: 14.500px; letter-spacing: -.3px; color: #3b3a39; }
  .tool > svg { width: 40px; height: 40px; margin-bottom: 3px; }
  .tool span { min-height: 20px; display: flex; align-items: center; gap: 3px; }
  .tool.off { color: #c8c6c4; letter-spacing: -.25px; }
  .dd { width: 8px; height: 8px; margin-top: 3px; }
  .cliprow { display: flex; color: #c8c6c4; font-size: 14.500px; letter-spacing: -.3px; }
  .paste { width: 65px; padding: 5px 0 0 17px; line-height: 20px; }
  .paste svg { width: 36px; height: 40px; margin: 0 0 3px 3px; }
  .small { display: flex; flex-direction: column; margin-top: -1px; }
  .small span { height: 30px; display: flex; align-items: center; gap: 4px; }
  .small svg { width: 20px; height: 20px; }
  .collapse { width: 12px; height: 12px; margin: 96px 0 0 456px; }
  .work { height: 790px; flex: none; display: flex; }
  .rail { width: 51px; background: #f3f2f1; border-right: 1px solid #e1dfdd; flex: none; }
  .rail div { height: 50px; display: grid; place-items: center; padding-bottom: 1px; }
  .rail div.on { border-left: 3px solid #117865; padding: 0 2px 1px 0; }
  .rail svg { width: 24px; height: 24px; }
  .center { width: 1600px; flex: none; display: flex; flex-direction: column; }
  .upper { display: flex; height: 746px; }
  .canvas { width: 1559px; background: #fff; padding-left: 123px; overflow: hidden; flex: none; }
  .frame { width: 1312px; height: 738px; border: 2px dotted #555; border-top: 0; padding: 5px 0 0 15px; }
  .report { width: 1289px; height: 725px; padding: 14px 0 0 13px; overflow: hidden;
    background:
      radial-gradient(ellipse 440px 440px at 102% 104%, #172d31 0%, rgba(23,45,50,.75) 38%, rgba(23,45,50,0) 100%),
      radial-gradient(ellipse 500px 440px at 26% 70%, rgba(37,196,184,.9) 0%, rgba(32,182,170,.62) 45%, rgba(24,140,140,0) 100%),
      radial-gradient(ellipse 1270px 690px at 10% 94%, #1ba68c 0%, #179b87 34%, rgba(18,128,122,.86) 52%, rgba(14,96,108,.68) 74%, rgba(16,60,90,0) 100%),
      linear-gradient(96deg, #0f7068 0%, #0e5a5c 12%, #10344e 32%, #102d55 45%, #0e3666 72%, #11366f 100%); }
  .head { display: flex; align-items: center; height: 57px; }
  h1 { margin: 0; width: 403px; height: 57px; padding: 2px 0 0 5px; background: rgba(255,255,255,.07); box-shadow: 8px 10px 14px rgba(30,30,30,.42); font: bold 32px/44px 'Liberation Serif', serif; color: #d9b300; letter-spacing: .35px; }
  .arrow { width: 24px; height: 24px; margin: 0 0 2px 747px; }
  .back { width: 32px; height: 32px; margin: 0 0 2px 19px; }
  .card { background: rgba(255,255,255,.06); box-shadow: 8px 10px 14px rgba(30,35,35,.42); }
  .treecard { width: 1232px; height: 279px; margin-top: 13px; padding: 0 4px; }
  h2 { margin: 0; height: 24px; font: italic bold 18px/20px Roboto, sans-serif; color: #fff; text-align: center; letter-spacing: -.13px; }
  .treecard h2 { margin: 0 -5px 0 -4px; border-bottom: 1px solid #5b5960; line-height: 21px; }
  .tree { display: flex; margin-top: 6px; height: 245px; border: 1px solid rgba(200,200,220,.65); width: 1223px; }
  .tile { display: flex; flex-direction: column; justify-content: space-between; padding: 6px 0 0 4px; color: #fff; font-size: 12.700px; border-right: 1px solid rgba(255,255,255,.35); overflow: hidden; flex: none; letter-spacing: .05px; }
  .tile span:last-child { font-size: 12px; letter-spacing: -.18px; }
  .mex { flex: 1; display: flex; flex-direction: column; background: #6b007b; }
  .mex .tile { height: 215px; border-right: 0; border-bottom: 2px solid rgba(200,120,200,.4); }
  .mex .low { height: 28px; justify-content: flex-end; border: 0; }
  .bottom { display: flex; margin-top: 16px; }
  .units { width: 551px; height: 333px; }
  .units h2 { line-height: 21px; }
  .bars { padding-top: 27px; display: flex; flex-direction: column; gap: 11px; }
  .barrow { height: 35px; display: flex; align-items: center; font-size: 12px; font-weight: 600; }
  .barrow span { width: 141px; text-align: right; margin-right: 9px; letter-spacing: -.02px; }
  .barrow b { height: 36px; line-height: 34px; background: #a033ad; border: 1px solid #8048a5; text-align: right; padding-right: 7px; color: #fff; font-size: 12px; letter-spacing: -.1px; }
  .axis { display: flex; margin: 22px 0 0 84px; font-size: 12px; font-weight: 600; line-height: 18px; }
  .axis span { width: 134px; text-align: center; }
  .axtitle { margin-left: 130px; text-align: center; font: bold 14px/20px Roboto, sans-serif; letter-spacing: .25px; }
  .products { width: 338px; height: 307px; margin: 13px 0 0 17px; padding: 0 24px 0 27px; }
  h3 { margin: 0; height: 27px; font: bold 17px/23px Roboto, sans-serif; color: #d9b300; text-align: center; }
  .products h3 { margin-left: -3px; }
  .grid { display: grid; grid-template-columns: 143px 143px; grid-auto-rows: 89px; gap: 3px 1px; }
  .grid div { background: #fff; border: 2px solid #999; display: grid; place-items: center; color: #111; font-size: 12px; font-weight: 600; font-style: italic; letter-spacing: .25px; padding-top: 1px; }
  .segment { width: 307px; height: 307px; margin: 13px 0 0 19px; }
  .segment h3 { height: 26px; }
  .seg { height: 50px; display: flex; align-items: center; padding-left: 14px; gap: 9px; color: #fff; font-weight: 700; font-style: italic; font-size: 15.500px; letter-spacing: .32px; }
  .seg i { width: 16px; height: 16px; border: 1px solid #77706e; }
  .filters { width: 41px; border-left: 1px solid #aaa; background: #fff; display: flex; flex-direction: column; align-items: center; font-size: 18.500px; }
  .dbl { width: 16px; height: 16px; margin-top: 16px; }
  .funnel { width: 16px; height: 16px; margin: 19px 0 0 5px; }
  .filters span, .viz span { writing-mode: vertical-rl; line-height: 22px; margin-top: 10px; font-weight: 500; }
  .filters span { margin-right: 0; letter-spacing: -.1px; }
  .tabs { height: 44px; background: #f3f2f1; display: flex; }
  .views { width: 159px; height: 44px; }
  .page { background: #fff; border-left: 1px solid #c8c6c4; display: grid; place-items: center; position: relative; letter-spacing: .03px; flex: none; }
  .page.on { font-weight: 600; box-shadow: inset 0 -5px #117865; letter-spacing: -.06px; }
  .page em { position: absolute; right: 5px; top: 2px; font-style: normal; font-size: 13px; }
  .plus { width: 49px; background: #117865; display: grid; place-items: center; }
  .plus svg { width: 14px; height: 14px; margin-bottom: 4px; }
  .viz { width: 43px; flex: none; background: #f3f2f1; border-left: 1px solid #dcdad8; display: flex; flex-direction: column; align-items: center; font-size: 18.500px; }
  .viz span { margin-top: 18px; margin-right: 5px; letter-spacing: .22px; }
  .data { width: 226px; background: #f3f2f1; border-left: 1px solid #dcdad8; }
  .dhead { display: flex; justify-content: space-between; height: 57px; padding: 0 10px 0 10px; font-size: 18.500px; font-weight: 600; line-height: 49px; }
  .dhead .dbl { margin-top: 17px; }
  .dsearch { width: 215px; height: 30px; margin-left: 5px; background: #fff; border: 1px solid #d2d0ce; border-bottom: 1px solid #555; border-radius: 5px; display: flex; align-items: center; gap: 8px; padding-left: 14px; font-size: 16px; letter-spacing: -.1px; color: #605e5c; padding-top: 3px; }
  .dsearch svg { width: 19px; height: 19px; margin-bottom: 4px; }
  .dlist { display: flex; }
  .fields { width: 210px; padding-top: 1px; flex: none; font-size: 14.500px; letter-spacing: -.15px; color: #3b3a39; }
  .fin { height: 30px; display: flex; align-items: center; padding-left: 17px; }
  .cv { width: 13px; height: 13px; margin-right: 6px; }
  .fin .fi { width: 16px; height: 16px; margin-right: 7px; }
  .field { height: 30px; display: flex; align-items: center; padding-left: 37px; }
  .ex { width: 10px; height: 16px; margin-right: 8px; }
  .field i { width: 15px; height: 15px; border: 1px solid #8a8886; border-radius: 2px; margin-right: 11px; flex: none; background: #f8f7f6; }
  .field .fi { width: 15px; height: 17px; margin-right: 6px; }
  .scroll { width: 10px; height: 673px; background: #c8c8c8; margin-top: 20px; }
  .status { height: 30px; flex: none; background: #f3f2f1; border-top: 1px solid #e1dfdd; border-bottom: 2px solid #111; display: flex; align-items: center; justify-content: space-between; padding: 3px 13px 0 5px; letter-spacing: .08px; }
  .status svg { width: 252px; height: 28px; margin-top: -4px; }
  .taskbar { height: 60px; flex: none; display: flex; align-items: center; background: linear-gradient(90deg, #e2e6e8, #dfe4e8 30%, #e6e6e6 55%, #dfe4e8 85%, #e3e6e6); }
  .widgets { width: 30px; height: 28px; margin-left: 26px; }
  .start { width: 29px; height: 29px; margin-left: 447px; }
  .tsearch { width: 273px; height: 39px; margin-left: 17px; border: 1px solid #cfd1d3; border-radius: 20px; background: #f7f8f8; display: flex; align-items: center; font-size: 16px; color: #5a5a5a; letter-spacing: 0; padding-left: 13px; }
  .mag { width: 19px; height: 19px; margin-right: 12px; }
  .squirrel { width: 64px; height: 36px; margin-left: auto; margin-right: 2px; }
  .apps { display: flex; margin-left: 7px; gap: 6px; }
  .app { width: 49px; height: 50px; display: flex; flex-direction: column; align-items: center; padding-top: 7px; border-radius: 5px; }
  .app svg { width: 35px; height: 35px; }
  .app i { width: 8px; height: 4px; border-radius: 2px; background: #7d7d7d; margin-top: 2px; }
  .app.active { background: #f5f6f7; box-shadow: 0 0 0 1px #d5d8da; }
  .active i { width: 20px; background: #0078d4; }
  .tchev { width: 14px; height: 14px; margin-left: 128px; }
  .cloud { width: 22px; height: 20px; margin-left: 22px; }
  .lang { display: flex; flex-direction: column; align-items: center; line-height: 20px; margin: 0 0 1px 16px; width: 42px; letter-spacing: -.1px; font-size: 14.500px; color: #222; }
  .wifi { width: 80px; height: 20px; margin-left: 16px; }
  .clock { width: 90px; margin: 0 0 1px 5px; display: flex; flex-direction: column; align-items: flex-end; line-height: 20px; font-size: 14.500px; letter-spacing: 0; color: #222; }
  .bell { width: 17px; height: 20px; margin-left: 11px; }
</style>
